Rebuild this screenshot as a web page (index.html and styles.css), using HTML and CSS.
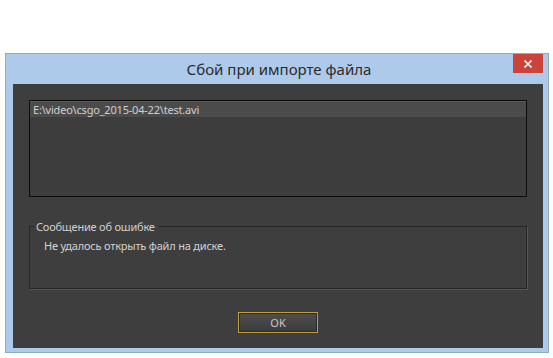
FILE: index.html
```html
<!DOCTYPE html>
<html lang="ru">
<head>
    <meta charset="UTF-8">
    <meta name="viewport" content="width=device-width, initial-scale=1.0">
    <title>Сбой при импорте файла</title>
    <link rel="stylesheet" href="styles.css">
</head>
<body>
    <div class="window">
        <div class="titlebar">
            <span></span>
            <span class="title">Сбой при импорте файла</span>
            <button class="close-btn" aria-label="Закрыть">
                <svg width="10" height="10" viewBox="0 0 10 10">
                    <path d="M1.5 1.5 L8.5 8.5 M8.5 1.5 L1.5 8.5" stroke="#fff" stroke-width="1.6" fill="none"/>
                </svg>
            </button>
        </div>

        <div class="content">
            <div class="file-list">
                <div class="file-row">E:\video\csgo_2015-04-22\test.avi</div>
            </div>

            <fieldset class="group">
                <legend>Сообщение об ошибке</legend>
                <p class="message">Не удалось открыть файл на диске.</p>
            </fieldset>

            <div class="button-row">
                <button class="ok-btn">OK</button>
            </div>
        </div>
    </div>
</body>
</html>
```

FILE: styles.css
```css
body {
    margin: 0;
    background-color: #ffffff;
    font-family: "Segoe UI", "Noto Sans", sans-serif;
}

.window {
    box-sizing: border-box;
    width: 544px;
    height: 300px;
    margin: 53px 0 0 5px;
    padding: 0 5px 4px 7px;
    border: 1px solid #8fabcb;
    background-color: #aecaea;
    display: flex;
    flex-direction: column;
}

.titlebar {
    height: 30px;
    display: grid;
    grid-template-columns: 1fr auto 1fr;
    align-items: start;
}

.title {
    font-size: 15px;
    color: #2b2b2b;
    line-height: 30px;
    padding-left: 2px;
}

.close-btn {
    justify-self: end;
    width: 30px;
    height: 19px;
    margin: 0;
    padding: 0;
    border: none;
    background-color: #c9453c;
    display: flex;
    align-items: center;
    justify-content: center;
}

.content {
    flex: 1;
    background-color: #3e3e3e;
    padding: 16px 16px 15px 16px;
    display: flex;
    flex-direction: column;
    font-size: 11px;
    letter-spacing: -0.2px;
}

.file-list {
    height: 95px;
    border: 1px solid #0c0c0c;
    background-color: #3d3d3d;
}

.file-row {
    height: 15px;
    padding-left: 3px;
    line-height: 15px;
    color: #cfcfcf;
    background-color: #4b4b4b;
    border-top: 1px solid #5a5a5a;
}

.group {
    margin: 22px 0 0 0;
    padding: 0 0 0 14px;
    height: 70px;
    box-sizing: border-box;
    border: 1px solid #262626;
    box-shadow: 1px 1px 0 #555555;
}

.group legend {
    margin-left: -10px;
    padding: 0 4px 0 2px;
    color: #cfcfcf;
}

.message {
    margin: 4px 0 0 0;
    color: #d2d2d2;
}

.button-row {
    margin-top: auto;
    display: flex;
    justify-content: center;
}

.ok-btn {
    width: 80px;
    height: 21px;
    padding: 0;
    font-family: "Segoe UI", "Noto Sans", sans-serif;
    font-size: 11px;
    color: #c8c8c8;
    border: 1px solid #bfa03e;
    box-shadow: inset 0 0 0 1px #2a2a2a;
    background: linear-gradient(#4f4f4f, #3b3b3b);
}
```
